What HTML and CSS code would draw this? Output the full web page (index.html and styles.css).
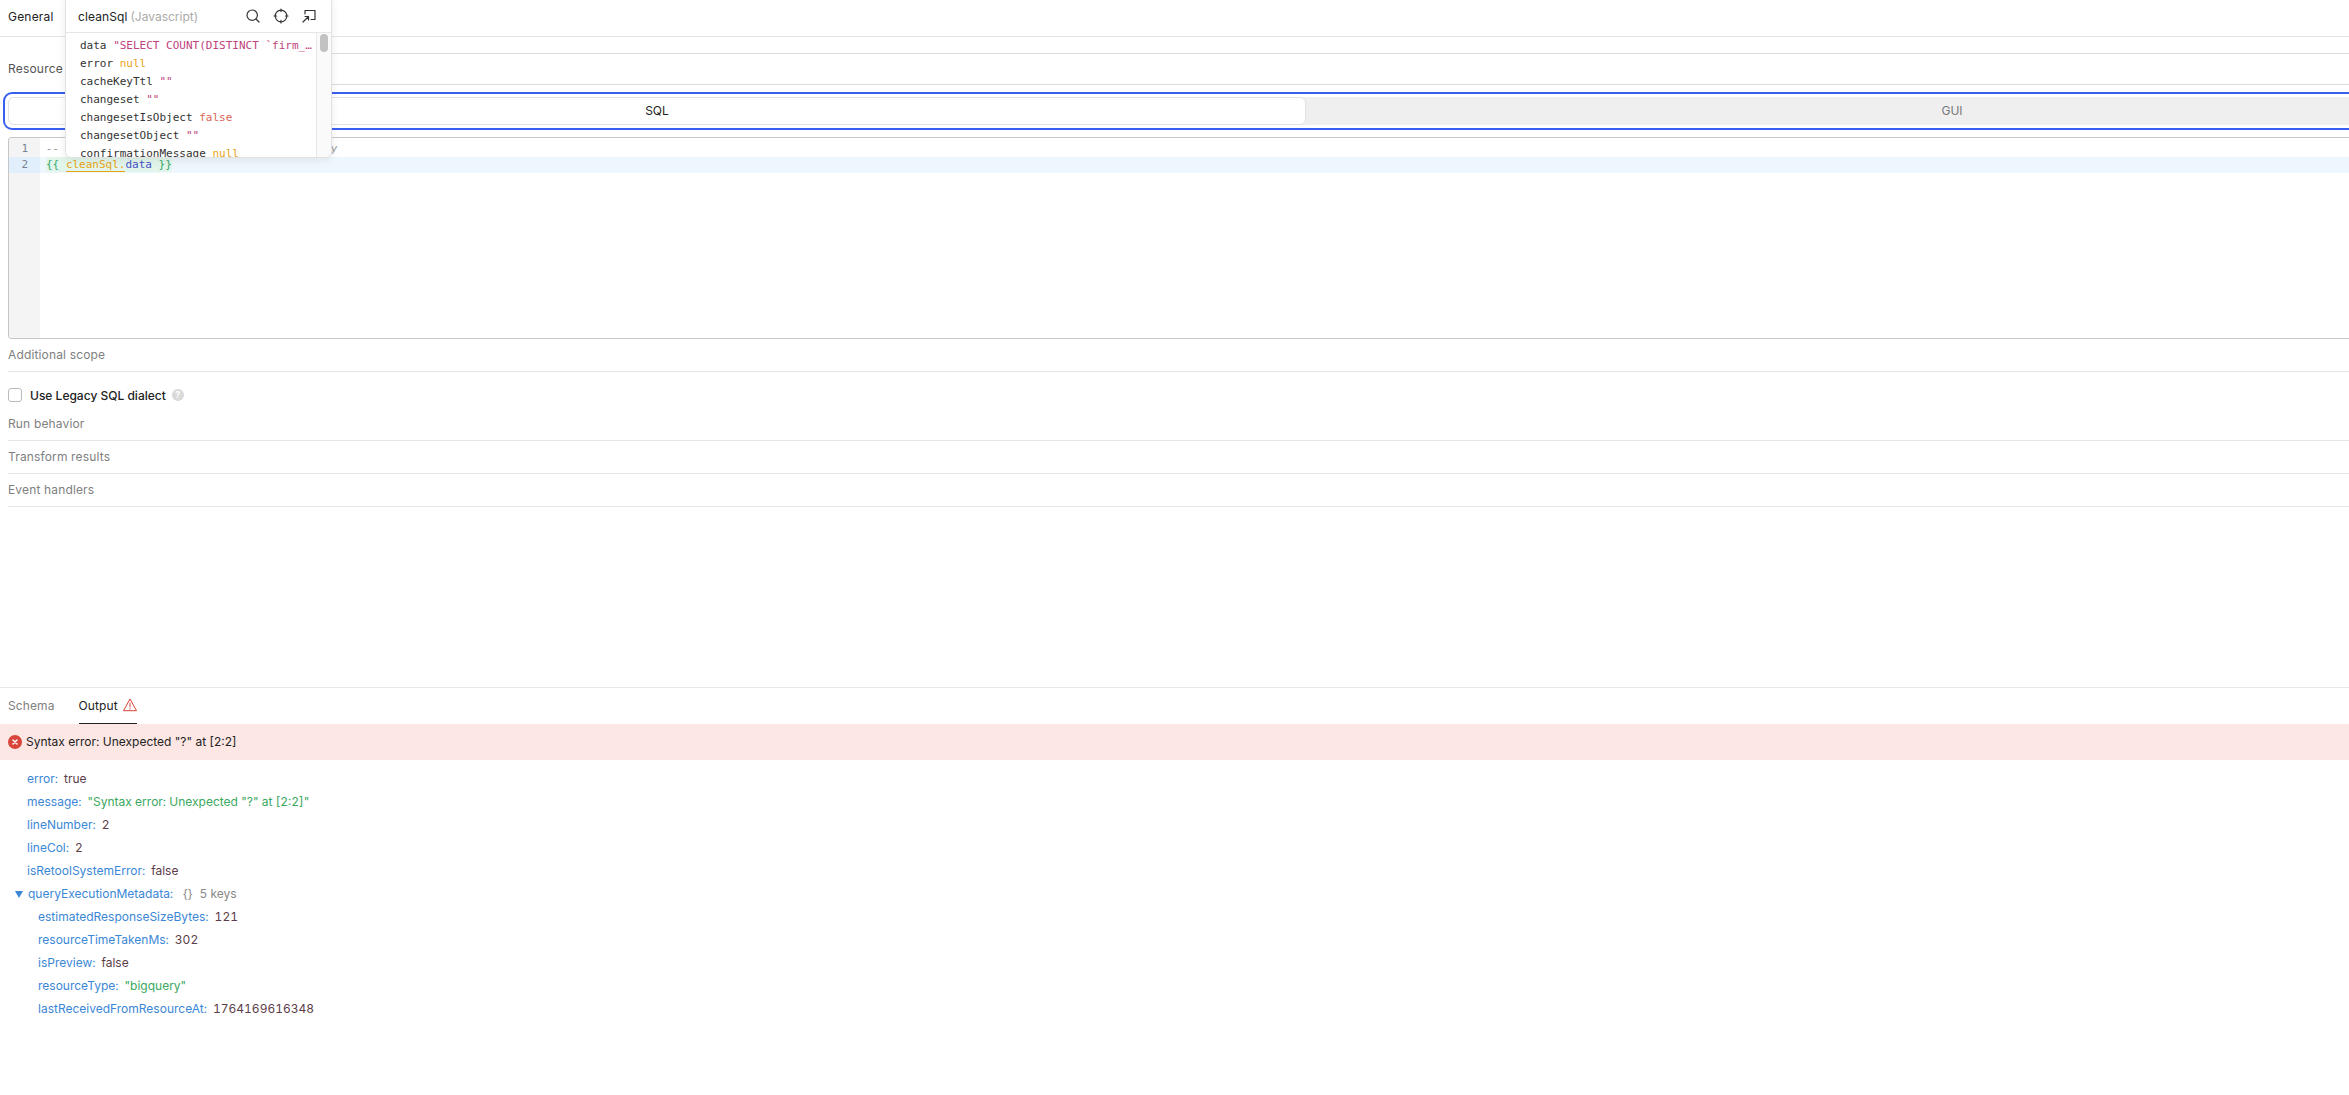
FILE: index.html
```html
<!DOCTYPE html>
<html lang="en">
<head>
<meta charset="utf-8">
<title>cleanSql</title>
<link rel="stylesheet" href="styles.css">
</head>
<body>
<div class="page">
  <header class="general"><span>General</span></header>
  <div class="resource">
    <span class="resource-label">Resource</span>
    <div class="resource-field"></div>
  </div>
  <div class="focus-ring">
    <div class="segmented">
      <div class="seg seg-active">SQL</div>
      <div class="seg">GUI</div>
    </div>
  </div>
  <div class="editor">
    <div class="gutter">
      <div class="gutter-line">1</div>
      <div class="gutter-line gutter-line-active">2</div>
    </div>
    <div class="code">
      <div class="code-line"><span class="comment">-- Run a cleaned SQL from the cleanSql query</span></div>
      <div class="code-line code-line-active"><span class="tpl"><span class="tpl-brace">{{ </span><span class="tpl-var">cleanSql.</span><span class="tpl-prop">data</span><span class="tpl-brace"> }}</span></span></div>
    </div>
  </div>
  <div class="section section-first">Additional scope</div>
  <label class="check-row">
    <span class="checkbox"></span>
    <span class="check-label">Use Legacy SQL dialect</span>
    <span class="help">?</span>
  </label>
  <div class="section">Run behavior</div>
  <div class="section">Transform results</div>
  <div class="section">Event handlers</div>
  <div class="spacer"></div>
  <nav class="tabs">
    <div class="tab">Schema</div>
    <div class="tab tab-active">Output
      <svg class="warn" width="14" height="14" viewBox="0 0 14 14" fill="none" stroke="#d9443a" stroke-width="1" stroke-linejoin="round"><path d="M7 1 L13.5 12.7 H0.5 Z"/><path d="M7 5 V9" stroke-linecap="round"/><path d="M7 10.6 V11" stroke-linecap="round"/></svg>
    </div>
  </nav>
  <div class="error-band">
    <svg width="14" height="14" viewBox="0 0 14 14"><circle cx="7" cy="7" r="7" fill="#d9443a"/><path d="M5 5 L9 9 M9 5 L5 9" stroke="#fff" stroke-width="1.5" stroke-linecap="round"/></svg>
    <span>Syntax error: Unexpected "?" at [2:2]</span>
  </div>
  <div class="tree">
    <div class="kv"><span class="k">error:</span><span class="v">true</span></div>
    <div class="kv"><span class="k">message:</span><span class="s">"Syntax error: Unexpected "?" at [2:2]"</span></div>
    <div class="kv"><span class="k">lineNumber:</span><span class="v">2</span></div>
    <div class="kv"><span class="k">lineCol:</span><span class="v">2</span></div>
    <div class="kv"><span class="k">isRetoolSystemError:</span><span class="v">false</span></div>
    <div class="kv kv-open">
      <svg class="caret" width="8" height="7" viewBox="0 0 8 7"><path d="M0 0 H8 L4 7 Z" fill="#3b87d6"/></svg>
      <span class="k">queryExecutionMetadata:</span><span class="m m-brace">{}</span><span class="m m-keys">5 keys</span>
    </div>
    <div class="kv kv-nested"><span class="k">estimatedResponseSizeBytes:</span><span class="v">121</span></div>
    <div class="kv kv-nested"><span class="k">resourceTimeTakenMs:</span><span class="v">302</span></div>
    <div class="kv kv-nested"><span class="k">isPreview:</span><span class="v">false</span></div>
    <div class="kv kv-nested"><span class="k">resourceType:</span><span class="s">"bigquery"</span></div>
    <div class="kv kv-nested"><span class="k">lastReceivedFromResourceAt:</span><span class="v">1764169616348</span></div>
  </div>
</div>
<aside class="popover">
  <div class="pop-head">
    <span class="pop-title">cleanSql</span><span class="pop-kind">(Javascript)</span>
    <span class="pop-icons">
      <svg width="16" height="16" viewBox="0 0 16 16" fill="none" stroke="#333" stroke-width="1.2" stroke-linecap="round"><circle cx="7.2" cy="7.2" r="5.2"/><path d="M11 11 L14 14"/></svg>
      <svg width="16" height="16" viewBox="0 0 16 16" fill="none" stroke="#333" stroke-width="1.2" stroke-linecap="round"><circle cx="8" cy="8" r="5.8"/><path d="M8 1 V3.6 M8 12.4 V15 M1 8 H3.6 M12.4 8 H15"/></svg>
      <svg width="16" height="16" viewBox="0 0 16 16" fill="none" stroke="#333" stroke-width="1.2" stroke-linecap="round" stroke-linejoin="round"><path d="M4 6 V2.5 H14 V11.5 H10"/><path d="M2 14 L7.5 8.5 M4 8.5 H7.5 V12"/></svg>
    </span>
  </div>
  <div class="pop-body">
    <div class="pop-list">
      <div class="pop-row">data <span class="c-str">"SELECT COUNT(DISTINCT `firm_…</span></div>
      <div class="pop-row">error <span class="c-null">null</span></div>
      <div class="pop-row">cacheKeyTtl <span class="c-empty">""</span></div>
      <div class="pop-row">changeset <span class="c-empty">""</span></div>
      <div class="pop-row">changesetIsObject <span class="c-bool">false</span></div>
      <div class="pop-row">changesetObject <span class="c-empty">""</span></div>
      <div class="pop-row">confirmationMessage <span class="c-null">null</span></div>
    </div>
    <div class="pop-scroll"><div class="pop-thumb"></div></div>
  </div>
</aside>
</body>
</html>
```
FILE: styles.css
```css
* { box-sizing: border-box; }
html, body { margin: 0; padding: 0; height: 100%; overflow: hidden; background: #fff; }
body { font-family: Inter, "Liberation Sans", sans-serif; font-size: 12px; color: #1f1f1f; position: relative; }
.page { display: flex; flex-direction: column; height: 1095px; width: 2349px; overflow: hidden; }

.general { height: 37px; flex: none; border-bottom: 1px solid #e4e4e4; padding: 0 0 3px 8px; display: flex; align-items: center; font-weight: 400; letter-spacing: .2px; color: #222; }

.resource { margin-top: 16px; display: flex; flex: none; padding-left: 8px; height: 32px; }
.resource-label { width: 57px; line-height: 31px; font-weight: 400; letter-spacing: .2px; color: #555; }
.resource-field { flex: 1; border-top: 1px solid #dcdcdc; border-bottom: 1px solid #dcdcdc; }

.focus-ring { flex: none; margin: 7px 0 0 3px; width: 2600px; height: 38px; border: 2px solid #3a5ff0; border-radius: 9px; padding: 3px; }
.segmented { display: grid; grid-template-columns: 1298px 1292px; height: 28px; background: #efefef; border-radius: 6px; }
.seg { display: flex; align-items: center; justify-content: center; padding-bottom: 1px; color: #777; font-size: 12px; }
.seg-active { background: #fff; color: #222; border: 1px solid #e2e2e2; border-radius: 6px; }

.editor { flex: none; margin: 7px 0 0 8px; width: 2400px; height: 202px; border: 1px solid #c6c6c6; border-radius: 4px 0 0 4px; border-right: 0; display: flex; font-family: "DejaVu Sans Mono", "Liberation Mono", monospace; font-size: 11px; overflow: hidden; }
.gutter { width: 31px; flex: none; background: #f4f4f4; padding-top: 3px; color: #7b8494; }
.gutter-line { height: 16px; line-height: 16px; text-align: right; padding-right: 12px; }
.gutter-line-active { background: #e1effc; }
.code { flex: 1; padding-top: 3px; }
.code-line { height: 16px; line-height: 16px; padding-left: 6px; white-space: pre; }
.code-line-active { background: #eff7fe; }
.comment { color: #9a9a9a; font-style: italic; }
.tpl { background: #e1f5ea; border-radius: 4px; display: inline-block; line-height: 15px; }
.tpl-brace { color: #3aa76d; }
.tpl-var { color: #e8a317; border-bottom: 1px solid #e8a317; }
.tpl-prop { color: #4750c9; }

.section { flex: none; height: 33px; margin-left: 8px; padding-bottom: 1px; border-bottom: 1px solid #e6e6e6; display: flex; align-items: center; color: #808080; font-size: 12px; font-weight: 400; letter-spacing: .15px; }
.section-first { height: 33px; }

.check-row { flex: none; height: 36px; margin-left: 8px; padding-top: 10px; display: flex; align-items: center; }
.checkbox { width: 14px; height: 14px; border: 1px solid #bbb; border-radius: 3px; background: #fff; }
.check-label { margin-left: 8px; font-weight: 500; color: #222; }
.help { margin-left: 6px; width: 12px; height: 12px; border-radius: 50%; background: #d9d9d9; color: #fff; font-size: 9px; font-weight: 700; line-height: 12px; text-align: center; }

.spacer { flex: 1; }

.tabs { flex: none; height: 37px; border-top: 1px solid #e8e8e8; padding-left: 8px; display: flex; gap: 24px; }
.tab { height: 36px; display: flex; align-items: center; gap: 5px; padding-bottom: 1px; color: #808080; letter-spacing: .1px; }
.tab-active { color: #222; border-bottom: 1px solid #222; }
.warn { margin-top: -1px; }

.error-band { flex: none; height: 36px; background: #fce7e5; padding: 0 0 1px 8px; display: flex; align-items: center; gap: 4px; color: #222; }

.tree { flex: none; height: 335px; padding: 7px 0 0 27px; font-variant-numeric: tabular-nums; }
.kv { height: 23px; display: flex; align-items: center; gap: 6px; color: #5c3d48; white-space: pre; }
.k { color: #3b87d6; }
.v { color: #5c3d48; }
.s { color: #3aa860; }
.m { color: #888; }
.m-brace { margin-left: 4px; }
.m-keys { margin-left: 1px; }
.kv-open { position: relative; margin-left: 1px; }
.caret { position: absolute; left: -13px; top: 9px; }
.kv-nested { margin-left: 11px; }

.popover { position: absolute; left: 65px; top: -6px; width: 267px; height: 164px; background: #fff; border: 1px solid #e2e2e2; border-radius: 6px; box-shadow: 0 2px 8px rgba(0,0,0,.08); overflow: hidden; z-index: 5; }
.pop-head { height: 38px; padding: 6px 14px 1px 12px; display: flex; align-items: center; border-bottom: 1px solid #e6e6e6; }
.pop-title { color: #222; letter-spacing: .1px; }
.pop-kind { margin-left: 3px; color: #aaa; }
.pop-icons { margin-left: auto; display: flex; gap: 12px; }
.pop-body { display: flex; height: 125px; }
.pop-list { flex: 1; padding: 4px 0 0 14px; font-family: "DejaVu Sans Mono", "Liberation Mono", monospace; font-size: 11px; color: #333; overflow: hidden; }
.pop-row { height: 18px; line-height: 18px; white-space: pre; }
.c-str { color: #c0427e; }
.c-null { color: #e8a317; }
.c-empty { color: #c0427e; }
.c-bool { color: #d9655a; }
.pop-scroll { width: 15px; flex: none; background: #fafafa; border-left: 1px solid #e8e8e8; padding: 1px 3px; }
.pop-thumb { width: 8px; height: 18px; border-radius: 4px; background: #c2c2c2; }
```
